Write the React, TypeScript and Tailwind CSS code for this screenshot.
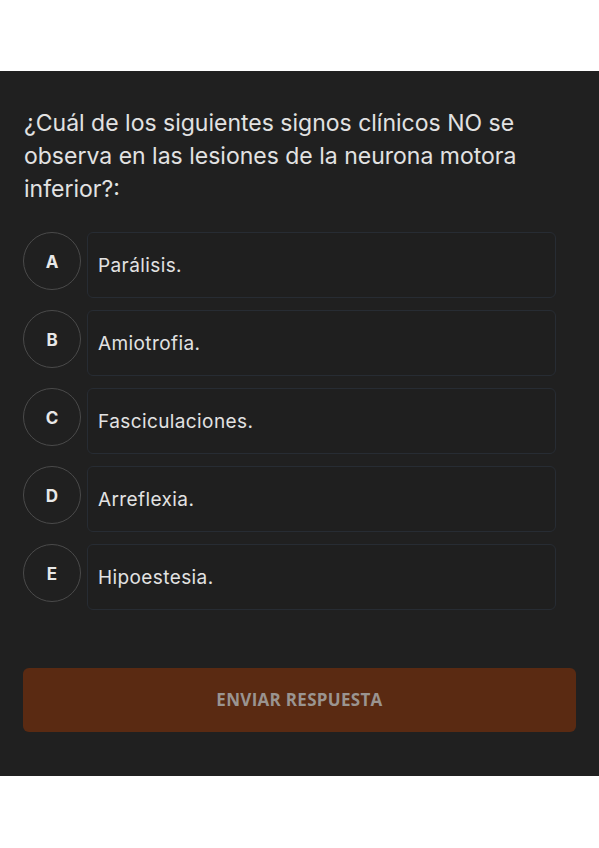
import { useState } from 'react'

const options = [
    { id: 'A', label: 'Parálisis.' },
    { id: 'B', label: 'Amiotrofia.' },
    { id: 'C', label: 'Fasciculaciones.' },
    { id: 'D', label: 'Arreflexia.' },
    { id: 'E', label: 'Hipoestesia.' },
]

export default function App() {
    const [selected, setSelected] = useState<string | null>(null)

    return (
        <div className="min-h-[848px] bg-white pt-[71px] font-['Inter',sans-serif]">
            <div className="bg-[#202020] px-[23px] pt-[36px] pb-[44px]">
                <p className="pl-px pr-[30px] text-[23px] leading-[33px] text-[#e2e2e2]">
                    ¿Cuál de los siguientes signos clínicos NO se observa en las lesiones de la neurona motora inferior?:
                </p>

                <div className="mt-[26px] flex flex-col gap-[12px]">
                    {options.map(o => (
                        <button
                            key={o.id}
                            onClick={() => setSelected(o.id)}
                            className="flex items-start gap-[6px] text-left"
                        >
                            <span className="flex h-[58px] w-[58px] flex-shrink-0 items-center justify-center rounded-full border border-[#4a4a4a] pt-[3px] text-[17px] font-bold text-[#e8e8e8]">
                                {o.id}
                            </span>
                            <span
                                className={`flex h-[66px] w-[469px] items-center rounded-md border bg-[#1f1f1f] px-[10px] pt-[3px] text-[19px] tracking-[0.4px] text-[#e2e2e2] ${
                                    selected === o.id ? 'border-[#5a2a12]' : 'border-[#272c33]'
                                }`}
                            >
                                {o.label}
                            </span>
                        </button>
                    ))}
                </div>

                <button className="mt-[58px] flex h-[64px] w-full items-center justify-center rounded-md bg-[#5a2a12] font-['Open_Sans',sans-serif] text-[17px] font-bold tracking-[0.3px] text-[#9a9490]">
                    ENVIAR RESPUESTA
                </button>
            </div>
        </div>
    )
}
